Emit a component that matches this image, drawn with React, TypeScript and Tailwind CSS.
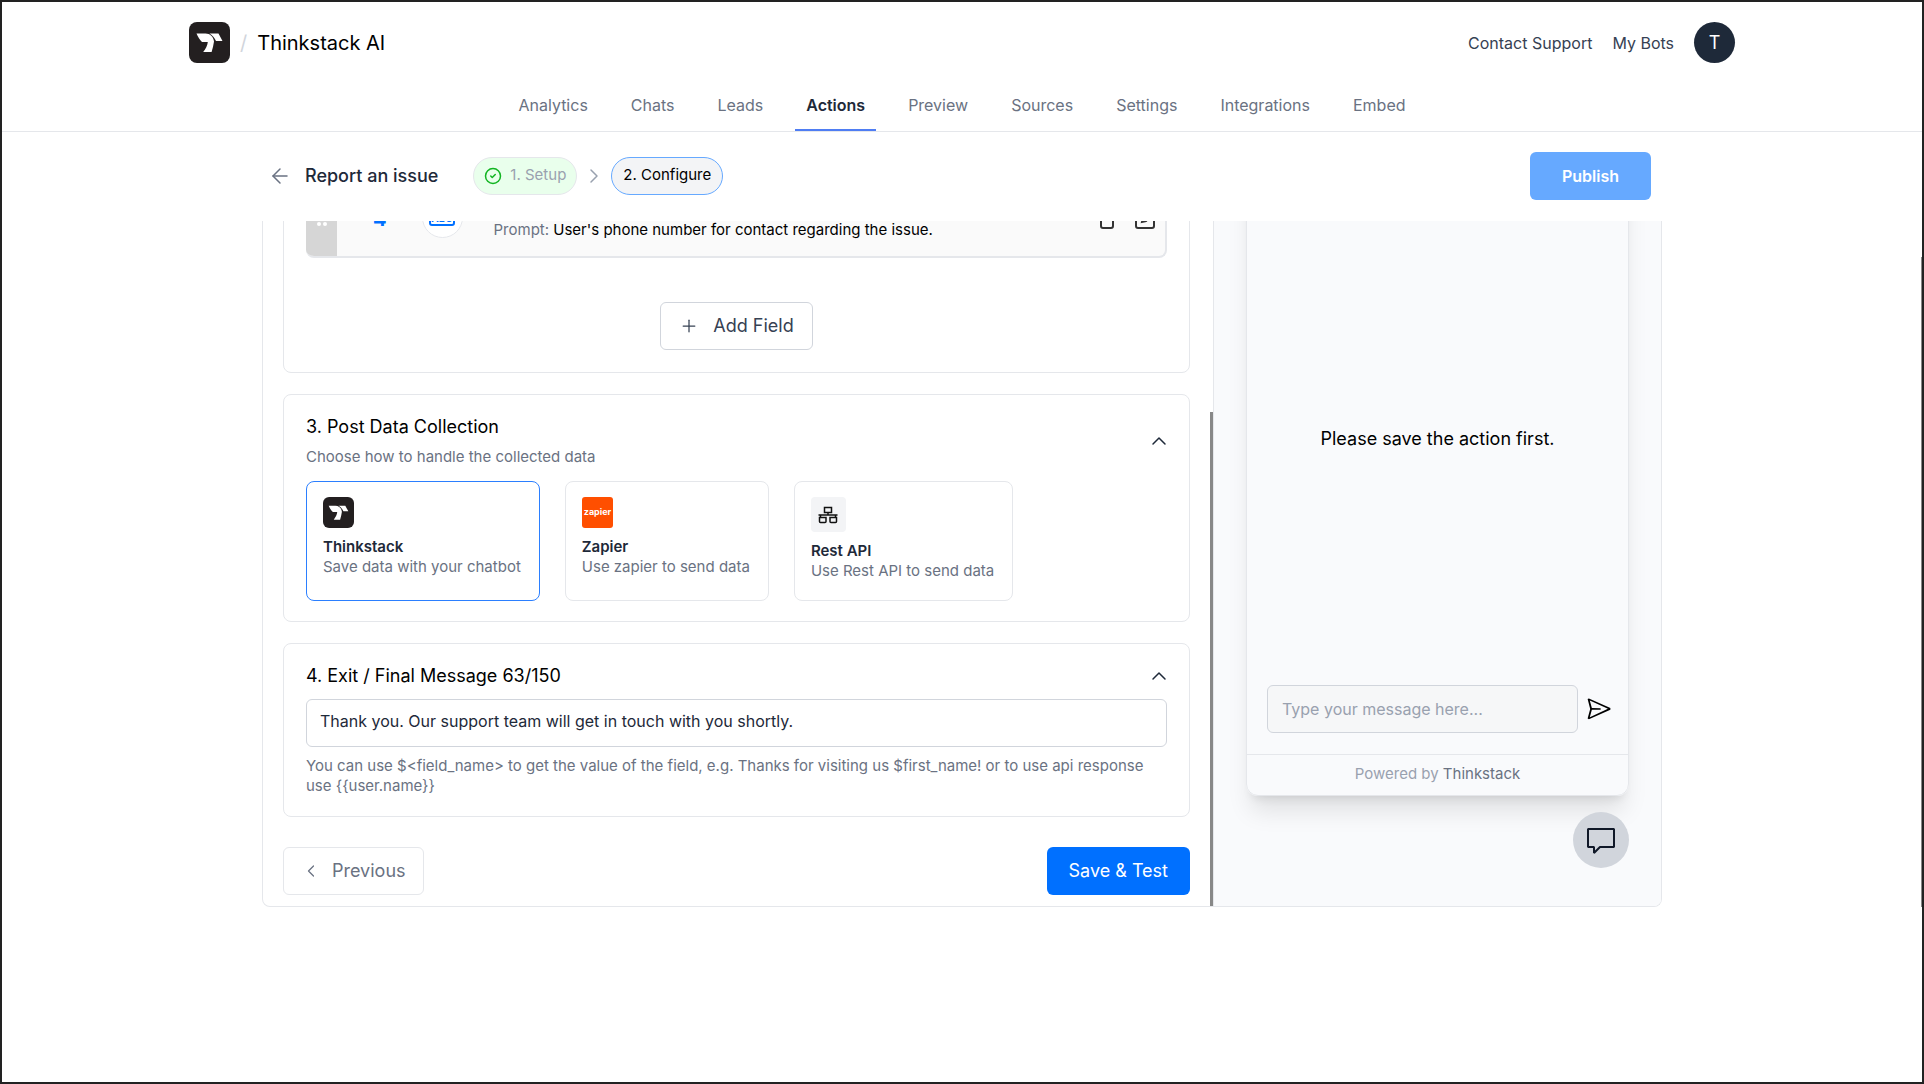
import { useState } from "react";
import { VscComment, VscSend } from "react-icons/vsc";
import {
  ArrowLeft,
  ChevronLeft,
  ChevronRight,
  ChevronUp,
  CircleCheck,
  Plus,
} from "lucide-react";

const tabs = [
  "Analytics",
  "Chats",
  "Leads",
  "Actions",
  "Preview",
  "Sources",
  "Settings",
  "Integrations",
  "Embed",
];

function ThinkstackLogo({ className }: { className: string }) {
  return (
    <svg viewBox="0 0 41 41" className={className} aria-hidden="true">
      <rect width="41" height="41" rx="8" fill="#231f20" />
      <path
        d="M7.5 11.5H16.5C21 11.5 24.5 14.5 25 19.5C24.6 23 23.6 26.5 22.6 30H14.2C16.5 27 18.6 23.5 18.8 20H13C10.8 18 9 15 7.5 11.5Z"
        fill="#fff"
      />
      <path d="M20.5 11.5H29.5L33.5 19H27C25.5 15.8 23.5 13.2 20.5 11.5Z" fill="#fff" />
    </svg>
  );
}

function ZapierLogo() {
  return (
    <svg viewBox="0 0 31 31" className="h-[31px] w-[31px]" aria-hidden="true">
      <rect width="31" height="31" rx="3" fill="#ff4f00" />
      <text
        x="15.5"
        y="18"
        textAnchor="middle"
        fill="#fff"
        fontSize="9"
        fontWeight="700"
        fontFamily="Inter, sans-serif"
      >
        zapier
      </text>
    </svg>
  );
}

function RestIcon() {
  return (
    <span className="flex h-[35px] w-[35px] items-center justify-center rounded-sm bg-gray-100">
      <svg
        viewBox="0 0 20 18"
        className="h-[18px] w-5"
        fill="none"
        stroke="#111"
        strokeWidth="1.5"
        aria-hidden="true"
      >
        <rect x="6.5" y="1.5" width="7" height="5" />
        <path d="M10 6.5V9M0.5 9H19.5M2.5 9V11.5M17.5 9V11.5" />
        <path d="M1.5 11.5H8V15.5Q8 16.5 7 16.5H2.5Q1.5 16.5 1.5 15.5ZM12 11.5H18.5V15.5Q18.5 16.5 17.5 16.5H13Q12 16.5 12 15.5Z" />
      </svg>
    </span>
  );
}

const handlers = [
  {
    name: "Thinkstack",
    text: "Save data with your chatbot",
    icon: <ThinkstackLogo className="h-[31px] w-[31px]" />,
  },
  { name: "Zapier", text: "Use zapier to send data", icon: <ZapierLogo /> },
  { name: "Rest API", text: "Use Rest API to send data", icon: <RestIcon /> },
];

function Header() {
  return (
    <header className="border-b border-gray-200">
      <div className="mx-auto flex max-w-[1546px] items-center justify-between pt-5">
        <div className="flex items-center">
          <ThinkstackLogo className="h-[41px] w-[41px]" />
          <span className="mx-[10px] text-xl text-gray-300">/</span>
          <span className="text-xl text-black">Thinkstack AI</span>
        </div>
        <div className="flex items-center gap-5 text-base text-gray-700">
          <a href="#support">Contact Support</a>
          <a href="#bots">My Bots</a>
          <button className="h-[41px] w-[41px] rounded-full bg-gray-800 text-lg text-white">
            T
          </button>
        </div>
      </div>
      <nav className="mt-[17px] flex justify-center gap-[21px] text-base">
        {tabs.map((tab) => (
          <a
            key={tab}
            href={`#${tab.toLowerCase()}`}
            className={
              tab === "Actions"
                ? "border-b-2 border-[#4f7df3] px-[11px] pt-[13px] pb-3 font-semibold text-gray-800"
                : "border-b-2 border-transparent px-[11px] pt-[13px] pb-3 text-gray-500"
            }
          >
            {tab}
          </a>
        ))}
      </nav>
    </header>
  );
}

function FieldRow() {
  return (
    <div className="flex h-20 overflow-hidden rounded-lg border-b-2 border-r-2 border-gray-200 bg-[#fafafa]">
      <div className="flex w-[31px] items-center justify-center bg-[#d6d6d6]">
        <svg width="12" height="20" viewBox="0 0 12 20" fill="#fff" aria-hidden="true">
          <circle cx="3" cy="3" r="2" />
          <circle cx="9" cy="3" r="2" />
          <circle cx="3" cy="10" r="2" />
          <circle cx="9" cy="10" r="2" />
          <circle cx="3" cy="17" r="2" />
          <circle cx="9" cy="17" r="2" />
        </svg>
      </div>
      <div className="flex flex-1 items-center pl-9 pr-[10px]">
        <span className="pt-1 text-xl font-bold text-[#0070ff]">4</span>
        <span className="ml-[35px] flex h-[41px] w-[41px] items-center justify-center rounded-full border border-gray-200 bg-white">
          <svg width="26" height="18" viewBox="0 0 26 18" fill="none" aria-hidden="true">
            <rect x="1" y="1" width="24" height="16" rx="2" stroke="#0070ff" strokeWidth="2" />
            <text x="13" y="14" textAnchor="middle" fontSize="10" fontWeight="700" fill="#0070ff">
              ABC
            </text>
          </svg>
        </span>
        <p className="ml-[31px] flex-1 pt-[26px] text-[15px] text-black">
          <span className="text-gray-500">Prompt:</span> User's phone number for
          contact regarding the issue.
        </p>
        <div className="flex gap-[18px]">
          <button aria-label="Delete field">
            <svg width="20" height="24" viewBox="0 0 20 24" fill="none" stroke="#333" strokeWidth="2">
              <path d="M1 5H19M7 5V2H13V5M4 5V21Q4 23 6 23H14Q16 23 16 21V5" />
            </svg>
          </button>
          <button aria-label="Edit field">
            <svg width="20" height="24" viewBox="0 0 20 24" fill="none" stroke="#333" strokeWidth="2">
              <path d="M11 5H3Q1 5 1 7V21Q1 23 3 23H17Q19 23 19 21V13M7 17L8 13L17 4L20 7L11 16Z" />
            </svg>
          </button>
        </div>
      </div>
    </div>
  );
}

export default function App() {
  const [handler, setHandler] = useState("Thinkstack");
  const [message, setMessage] = useState(
    "Thank you. Our support team will get in touch with you shortly."
  );

  return (
    <div className="relative min-h-screen border-2 border-[#222] bg-white font-['Inter',sans-serif] text-base">
      <Header />
      <main className="mx-auto max-w-[1400px]">
        <div className="flex h-[89px] items-center justify-between pb-[2px] pl-[6px] pr-[11px]">
          <div className="flex items-center">
            <button aria-label="Back">
              <ArrowLeft size={24} strokeWidth={1.5} className="text-gray-500" />
            </button>
            <h1 className="ml-[13px] text-lg font-medium text-gray-800">Report an issue</h1>
            <button className="ml-[35px] flex h-[38px] items-center gap-2 rounded-full border border-gray-200 bg-[#e9ffec] px-[10px] text-[15px] text-gray-400">
              <CircleCheck size={18} strokeWidth={2} className="text-[#12b522]" />
              1. Setup
            </button>
            <ChevronRight size={24} strokeWidth={1.5} className="mx-[5px] text-gray-400" />
            <button className="h-[38px] rounded-full border border-[#66a9ff] bg-gray-100 px-[11px] text-[15px] text-black">
              2. Configure
            </button>
          </div>
          <button className="h-12 rounded-md bg-[#66a9ff] px-8 text-base font-semibold text-white">
            Publish
          </button>
        </div>

        <div className="flex h-[686px] overflow-hidden rounded-b-lg border-x border-b border-gray-200">
          <section className="relative flex flex-1 flex-col justify-end gap-[21px] border-r border-gray-200 pb-[11px] pl-5 pr-[23px]">
            <div className="shrink-0 rounded-lg border border-gray-200 px-[22px] pb-[22px]">
              <FieldRow />
              <div className="mt-[44px] flex justify-center">
                <button className="flex h-12 items-center gap-[14px] rounded-md border border-gray-300 px-[18px] text-lg text-gray-700">
                  <Plus size={20} strokeWidth={1.5} />
                  Add Field
                </button>
              </div>
            </div>

            <div className="shrink-0 rounded-lg border border-gray-200 px-[22px] pb-5 pt-[18px]">
              <div className="flex items-center justify-between">
                <div>
                  <h2 className="text-lg text-black">3. Post Data Collection</h2>
                  <p className="mt-1 text-[15px]/6 text-gray-500">
                    Choose how to handle the collected data
                  </p>
                </div>
                <button aria-label="Collapse data collection" className="-mr-1">
                  <ChevronUp size={24} strokeWidth={1.5} className="text-gray-800" />
                </button>
              </div>
              <div className="mt-3 flex gap-[25px]">
                {handlers.map((item) => (
                  <button
                    key={item.name}
                    onClick={() => setHandler(item.name)}
                    className={
                      item.name === handler
                        ? "flex h-[120px] flex-col items-start rounded-lg border border-blue-500 pl-4 pr-[18px] pt-[15px] text-left"
                        : "flex h-[120px] flex-col items-start rounded-lg border border-gray-200 pl-4 pr-[18px] pt-[15px] text-left"
                    }
                  >
                    {item.icon}
                    <span className="mt-[9px] text-[15px]/5 font-semibold text-gray-800">
                      {item.name}
                    </span>
                    <span className="text-[15px]/5 text-gray-500">{item.text}</span>
                  </button>
                ))}
              </div>
            </div>

            <div className="shrink-0 rounded-lg border border-gray-200 px-[22px] pb-5 pt-[18px]">
              <div className="flex items-center justify-between">
                <label htmlFor="exit-message" className="text-lg text-black">
                  4. Exit / Final Message {message.length}/150
                </label>
                <button aria-label="Collapse final message" className="-mr-1">
                  <ChevronUp size={24} strokeWidth={1.5} className="text-gray-800" />
                </button>
              </div>
              <input
                id="exit-message"
                value={message}
                maxLength={150}
                onChange={(e) => setMessage(e.target.value)}
                className="mt-[9px] block h-12 w-full rounded-md border border-gray-300 px-[13px] pb-1 text-base text-gray-800"
              />
              <p className="mt-[9px] text-[15px]/5 text-gray-500">
                {
                  "You can use $<field_name> to get the value of the field, e.g. Thanks for visiting us $first_name! or to use api response use {{user.name}}"
                }
              </p>
            </div>

            <div className="mt-[9px] flex shrink-0 justify-between">
              <button className="flex h-12 items-center gap-[11px] rounded-md border border-gray-200 px-[17px] text-lg text-gray-500">
                <ChevronLeft size={20} strokeWidth={1.5} />
                Previous
              </button>
              <button className="h-12 rounded-md bg-[#0070ff] px-[22px] text-lg text-white">
                Save & Test
              </button>
            </div>
            <div className="absolute bottom-0 right-0 h-[494px] w-[3px] bg-[#888]" />
          </section>

          <aside className="flex w-[447px] flex-col justify-end bg-[#f9fafc] pb-[38px] pl-8 pr-8">
            <div className="flex h-[640px] shrink-0 flex-col rounded-xl border border-gray-200 shadow-xl">
              <p className="flex-1 pt-[268px] text-center text-lg text-black">
                Please save the action first.
              </p>
              <form className="flex items-center gap-2 pb-[21px] pl-5 pr-4">
                <input
                  aria-label="Message"
                  placeholder="Type your message here..."
                  className="h-12 min-w-0 flex-1 rounded-md border border-gray-300 bg-[#f6f7f8] px-[14px] text-base text-gray-800 placeholder:text-gray-400"
                />
                <button type="button" aria-label="Send">
                  <VscSend size={26} className="text-black" />
                </button>
              </form>
              <p className="border-t border-gray-200 pb-[9px] pt-[7px] text-center text-[15px]/6 text-gray-400">
                Powered by{" "}
                <a href="#thinkstack" className="text-gray-500">
                  Thinkstack
                </a>
              </p>
            </div>
            <button
              aria-label="Open chat"
              className="mt-4 flex h-14 w-14 shrink-0 items-center justify-center self-end rounded-full bg-gray-300"
            >
              <VscComment size={32} className="text-gray-900" />
            </button>
          </aside>
        </div>
      </main>
      {/* page scroll thumb */}
      <div className="absolute right-0 top-[255px] h-[650px] w-px bg-[#888]" />
    </div>
  );
}
